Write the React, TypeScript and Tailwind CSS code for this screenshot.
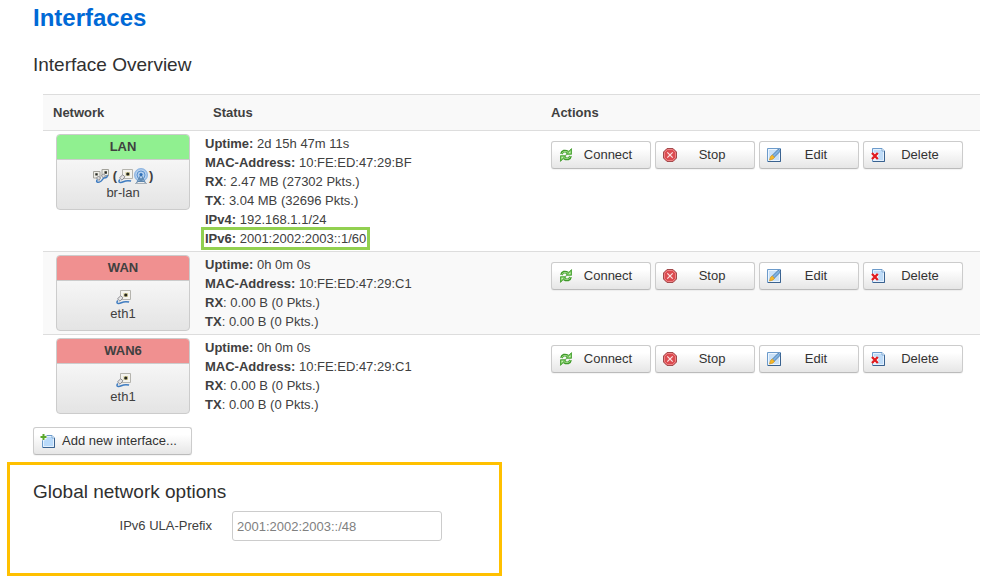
import { useState } from "react";
import type { ReactNode } from "react";

interface Stat {
  label: string;
  value: string;
  plainColon?: boolean;
  highlight?: boolean;
}

interface Iface {
  name: string;
  device: string;
  up: boolean;
  bridge?: boolean;
  stats: Stat[];
}

const interfaces: Iface[] = [
  {
    name: "LAN",
    device: "br-lan",
    up: true,
    bridge: true,
    stats: [
      { label: "Uptime", value: "2d 15h 47m 11s" },
      { label: "MAC-Address", value: "10:FE:ED:47:29:BF" },
      { label: "RX", value: "2.47 MB (27302 Pkts.)", plainColon: true },
      { label: "TX", value: "3.04 MB (32696 Pkts.)", plainColon: true },
      { label: "IPv4", value: "192.168.1.1/24" },
      { label: "IPv6", value: "2001:2002:2003::1/60", highlight: true },
    ],
  },
  {
    name: "WAN",
    device: "eth1",
    up: false,
    stats: [
      { label: "Uptime", value: "0h 0m 0s" },
      { label: "MAC-Address", value: "10:FE:ED:47:29:C1" },
      { label: "RX", value: "0.00 B (0 Pkts.)", plainColon: true },
      { label: "TX", value: "0.00 B (0 Pkts.)", plainColon: true },
    ],
  },
  {
    name: "WAN6",
    device: "eth1",
    up: false,
    stats: [
      { label: "Uptime", value: "0h 0m 0s" },
      { label: "MAC-Address", value: "10:FE:ED:47:29:C1" },
      { label: "RX", value: "0.00 B (0 Pkts.)", plainColon: true },
      { label: "TX", value: "0.00 B (0 Pkts.)", plainColon: true },
    ],
  },
];

function Icon({ children }: { children: ReactNode }) {
  return (
    <svg viewBox="0 0 16 16" className="size-4 shrink-0" fill="none" aria-hidden="true">
      {children}
    </svg>
  );
}

function ReloadIcon() {
  return (
    <Icon>
      <path d="M3.500 7C4 4 7 3.200 10 5" stroke="#3f9a2a" strokeWidth="2.800" />
      <path d="M8 7.300h5.500V1.600z" fill="#6cc350" stroke="#3f9a2a" strokeWidth=".8" />
      <path d="M3.700 6.800C4.300 4.600 7 3.600 10 5.300" stroke="#a5e08e" />
      <path d="M12.500 9c-.5 3-3.500 3.800-6.500 2" stroke="#3f9a2a" strokeWidth="2.800" />
      <path d="M8 8.700H2.500v5.700z" fill="#6cc350" stroke="#3f9a2a" strokeWidth=".8" />
      <path d="M12.300 9.200c-.6 2.200-3.300 3.200-6.300 1.500" stroke="#a5e08e" />
      <path d="M10.200 6.300h2.300V3.900zM5.800 9.700H3.500v2.400z" fill="#d3f5c5" />
    </Icon>
  );
}

function StopIcon() {
  return (
    <Icon>
      <path d="M5 1.500h6L14.500 5v6L11 14.500H5L1.500 11V5z" fill="#dc4b50" stroke="#a04a4c" />
      <path d="M5.400 2.500h5.200l2.900 2.900v5.200l-2.900 2.900H5.400l-2.900-2.900V5.400z" stroke="#ee8587" />
      <path d="m5.300 5.300 5.400 5.400m0-5.400-5.400 5.400" stroke="#fbe3e3" strokeWidth="1.200" />
    </Icon>
  );
}

function EditIcon() {
  return (
    <Icon>
      <path d="M1.500 1.500h13v13h-13z" fill="#c9e1f8" stroke="#6c9bcb" />
      <path d="M2.500 2.500h11v11h-11z" stroke="#edf6ff" />
      <path d="M14.500 2v12.500H2" stroke="#3a628f" />
      <path d="M6 8.500 12.500 2 14.500 4 8 10.500z" fill="#7eb2e2" stroke="#3f6d9f" strokeWidth=".8" />
      <path d="m4.500 9.500 1.800-1.500 2.200 2.200L7 12l-3.500 1z" fill="#f7b928" stroke="#d4951c" strokeWidth=".7" />
    </Icon>
  );
}

function DeleteIcon() {
  return (
    <Icon>
      <path d="M2.500 1.500h9.500l2.500 2.500v10.500h-12z" fill="#bfdcf8" stroke="#6c9bcb" />
      <path d="M3.500 2.500h8l2 2v9h-10z" stroke="#e4f1fe" />
      <path d="M14.500 4v10.500H3" stroke="#3a628f" />
      <path d="M12 1.500V4h2.500" fill="#fff" stroke="#6d9ccc" strokeWidth=".8" />
      <path d="m2.500 6.500 5 5.500m0-5.500-5 5.500" stroke="#fff" strokeWidth="4" />
      <path d="m2 6 5.800 6m0-6L2 12" stroke="#e01c20" strokeWidth="2.400" />
    </Icon>
  );
}

function AddIcon() {
  return (
    <Icon>
      <path d="M2.500 2.500h9.500L14.500 5v9.500h-12z" fill="#b9dafa" stroke="#6c9bcb" />
      <path d="M3.500 3.500h8l2 2v8h-10z" stroke="#e4f1fe" />
      <path d="M14.500 5v9.500H3" stroke="#3a628f" />
      <path d="M12 2.500V5h2.500" fill="#fff" stroke="#6d9ccc" strokeWidth=".8" />
      <path d="M3.500 .8v6.400M.3 4h6.400" stroke="#fff" strokeWidth="3.600" />
      <path d="M3.500 1v6M.5 4h6" stroke="#5aa82c" strokeWidth="2" />
    </Icon>
  );
}

function EthernetIcon() {
  return (
    <Icon>
      <path d="M5.500 1.500h10v9h-10z" fill="#f4f3ee" stroke="#b5b4ae" />
      <path d="M8.500 4h4.500v4H8.500z" fill="#d6cf9e" />
      <circle cx="10.800" cy="6" r="1.600" fill="#26281f" />
      <path d="m2.500 9.800 3.200-3 2.300 2-3 3.400z" fill="#e4e4e4" stroke="#85858a" strokeWidth=".9" />
      <path d="M2.800 11.500c-2.400 3.400 1 3.500 3.500 2.300 2.600-1.300 4.200-1.600 7.800-.7" stroke="#3f7cc0" strokeWidth="1.500" />
    </Icon>
  );
}

function BridgeIcon() {
  return (
    <Icon>
      <path d="M.5 3.500h6.500v6.500H.5zM9 1.500h6.500V8H9z" fill="#efeee8" stroke="#a3a29b" />
      <path d="M2.300 5.200h2.400v2.400H2.300zM11.500 3.300h2.400v2.400h-2.400z" fill="#2b2c24" />
      <path d="m3.500 10 2-2 2 2-1.500 2.500zM8.500 7.800l2-2 2 2-2 2.500z" fill="#dcdcdc" stroke="#7a7a7e" strokeWidth=".8" />
      <path d="M4.500 11.500c-2.500 2.500.5 3.500 3 2 2.700-1.600 1.800-4 5.200-3.700 1.500-.3 1.800-1.300 1.300-2.800" stroke="#3f7cc0" strokeWidth="1.400" />
    </Icon>
  );
}

function WifiIcon() {
  return (
    <Icon>
      <circle cx="8" cy="7" r="7" fill="#b5d0ee" />
      <circle cx="8" cy="7" r="6.300" stroke="#86afdd" />
      <circle cx="8" cy="7" r="4" stroke="#5c93d0" />
      <path d="M8 6.500 3.500 15M8 6.500l4.500 8.500M5.500 11h5M4.500 13.500h7M6 11l5.500 3M10 11l-5.500 3" stroke="#5d86ad" />
      <circle cx="8" cy="6.500" r="1.600" fill="#2f70b8" />
      <path d="M2 15.500h12" stroke="#aab2ba" />
    </Icon>
  );
}

const buttonStyle =
  "inline-flex h-7 items-center rounded-[3px] border border-[#ccc] border-b-[#bbb] bg-linear-to-b from-white from-25% to-[#e6e6e6] text-[13px] leading-4 text-[#333] shadow-[0_1px_1px_#0000000d] cursor-pointer";

const actions = [
  { label: "Connect", icon: <ReloadIcon /> },
  { label: "Stop", icon: <StopIcon /> },
  { label: "Edit", icon: <EditIcon /> },
  { label: "Delete", icon: <DeleteIcon /> },
];

function InterfaceBadge({ iface }: { iface: Iface }) {
  return (
    <div className="flex h-[76px] flex-col overflow-hidden rounded-[4px] border border-[#ccc] bg-linear-to-b from-white to-[#e4e4e4] text-center text-[13px] leading-[18px]">
      <div
        className={`border-b border-[#ccc] py-[3px] font-bold ${iface.up ? "bg-[#90f090]" : "bg-[#f09090]"}`}
      >
        {iface.name}
      </div>
      <div className="mt-2 flex h-4 items-center justify-center">
        {iface.bridge ? (
          <>
            <BridgeIcon />
            <b className="ml-1">(</b>
            <EthernetIcon />
            <WifiIcon />
            <b>)</b>
          </>
        ) : (
          <EthernetIcon />
        )}
      </div>
      <div>{iface.device}</div>
    </div>
  );
}

export default function App() {
  const [prefix, setPrefix] = useState("2001:2002:2003::/48");

  return (
    <div className="bg-white font-['Liberation_Sans',Arial,sans-serif] text-[13px] text-[#404040]">
      <main className="pr-[19px] pl-[33px]">
        <h1 className="text-2xl leading-9 font-bold text-[#0069d6]">Interfaces</h1>
        <h2 className="mt-[11px] text-[19px] leading-9 text-[#303030]">Interface Overview</h2>

        <div className="mt-[11px] pl-[10px]">
          <table className="w-full table-fixed border-collapse text-left">
            <thead>
              <tr className="h-9 border-t border-[#ddd] bg-[#f9f9f9]">
                <th className="w-[160px] px-[10px]">Network</th>
                <th className="w-[338px] px-[10px]">Status</th>
                <th className="px-[10px]">Actions</th>
              </tr>
            </thead>
            <tbody>
              {interfaces.map((iface) => (
                <tr key={iface.name} className="border-t border-[#ddd] align-top even:bg-[#f9f9f9]">
                  <td className="py-[3px] pr-[13px] pl-[13px]">
                    <InterfaceBadge iface={iface} />
                  </td>
                  <td className="py-[3px] pl-[2px] leading-[19px]">
                    {iface.stats.map((s) => (
                      <div key={s.label}>
                        <span className={s.highlight ? "outline-[3px] outline-offset-1 outline-[#92d050]" : ""}>
                          <b>{s.plainColon ? s.label : `${s.label}:`}</b>
                          {s.plainColon && ":"} {s.value}
                        </span>
                      </div>
                    ))}
                  </td>
                  <td className="py-[10px] pl-[10px]">
                    <div className="flex gap-1">
                      {actions.map((a) => (
                        <button key={a.label} type="button" className={`${buttonStyle} w-[100px] pr-2 pl-[6px]`}>
                          {a.icon}
                          <span className="flex-1">{a.label}</span>
                        </button>
                      ))}
                    </div>
                  </td>
                </tr>
              ))}
            </tbody>
          </table>
        </div>

        <button type="button" className={`${buttonStyle} mt-[10px] gap-[6px] pr-[14px] pl-[6px]`}>
          <AddIcon />
          Add new interface...
        </button>
      </main>

      <section className="mt-[7px] ml-[7px] h-[114px] max-w-[495px] border-[3px] border-[#ffc000] pt-[9px] pl-[23px]">
        <h2 className="text-[19px] leading-9 text-[#303030]">Global network options</h2>
        <div className="mt-px flex items-start gap-5">
          <label htmlFor="ula-prefix" className="w-[179px] pt-[6px] text-right leading-[18px]">
            IPv6 ULA-Prefix
          </label>
          <input
            id="ula-prefix"
            type="text"
            value={prefix}
            onChange={(e) => setPrefix(e.target.value)}
            className="h-[30px] w-[210px] rounded-[3px] border border-[#ccc] px-1 text-[#808080] outline-none focus:border-[#52a8ec]"
          />
        </div>
      </section>
    </div>
  );
}
